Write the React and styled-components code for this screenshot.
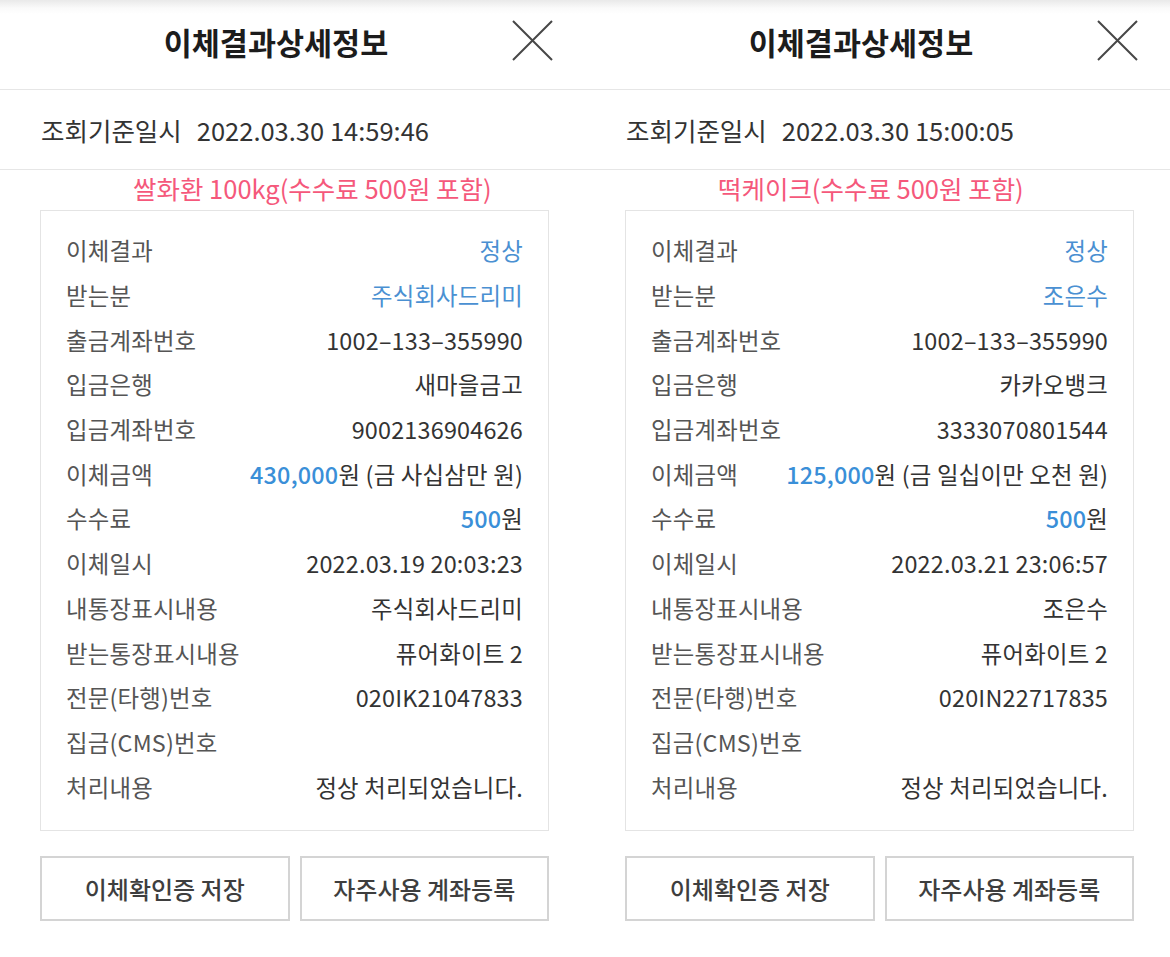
import React from 'react';
import styled, { createGlobalStyle } from 'styled-components';

const GlobalStyle = createGlobalStyle`
    body {
        margin: 0;
        background: #fff;
        font-family: "Noto Sans CJK KR", "Noto Sans", sans-serif;
    }
`;

const Page = styled.div`
    display: flex;
    width: 1170px;
    height: 957px;
    overflow: hidden;
`;

const Panel = styled.div`
    width: 585px;
    flex: none;
    display: flex;
    flex-direction: column;
`;

const Header = styled.div`
    height: 89px;
    display: flex;
    align-items: center;
    border-bottom: 1px solid #e6e6e6;
    background: linear-gradient(#e9e9e9 0, #fafafa 8px, #fff 14px);
`;

const Title = styled.h1`
    flex: 1;
    margin: 0 0 6px;
    padding-left: 40px;
    text-align: center;
    font-size: 30.5px;
    font-weight: 700;
    color: #1c1c1c;
`;

const Close = styled.button`
    width: 41px;
    height: 41px;
    margin: 0 32px 8px 0;
    padding: 0;
    border: none;
    background: none;
    display: flex;
`;

const DateRow = styled.div`
    height: 79px;
    display: flex;
    align-items: center;
    padding-left: 41px;
    border-bottom: 1px solid #e6e6e6;
    font-size: 25.5px;
    color: #333;
    gap: 15px;
`;

const Memo = styled.div`
    height: 34px;
    padding: 0 0 6px 133px;
    display: flex;
    align-items: center;
    font-size: 25.5px;
    color: #f5587b;
`;

const Card = styled.div`
    margin: 0 36px 0 40px;
    border: 1px solid #e4e4e4;
    padding: 17px 25px 21px;
    height: 581px;
`;

const Row = styled.div`
    height: 44.7px;
    display: flex;
    align-items: center;
    justify-content: space-between;
    font-size: 23.4px;
    letter-spacing: 0.2px;
`;

const Label = styled.span`
    color: #555;
`;

const Value = styled.span`
    color: ${p => (p.$blue ? '#4a90d2' : '#333')};
`;

const Num = styled.b`
    color: #3a8fd8;
    font-weight: 500;
`;

const Buttons = styled.div`
    display: flex;
    gap: 10px;
    margin: 25px 36px 0 40px;
`;

const Btn = styled.button`
    flex: 1;
    height: 65px;
    border: 2px solid #d4d4d4;
    background: #fff;
    font-family: inherit;
    font-size: 24px;
    font-weight: 500;
    color: #3e3e3e;
`;

const CloseIcon = () => (
    <svg width="41" height="41" viewBox="0 0 41 41">
        <path d="M1 1L40 40M40 1L1 40" stroke="#474747" strokeWidth="2" fill="none" />
    </svg>
);

const panels = [
    {
        stamp: '2022.03.30 14:59:46',
        memo: '쌀화환 100kg(수수료 500원 포함)',
        receiver: '주식회사드리미',
        bank: '새마을금고',
        account: '9002136904626',
        amount: '430,000',
        amountText: '(금 사십삼만 원)',
        date: '2022.03.19 20:03:23',
        myText: '주식회사드리미',
        code: '020IK21047833',
    },
    {
        stamp: '2022.03.30 15:00:05',
        memo: '떡케이크(수수료 500원 포함)',
        receiver: '조은수',
        bank: '카카오뱅크',
        account: '3333070801544',
        amount: '125,000',
        amountText: '(금 일십이만 오천 원)',
        date: '2022.03.21 23:06:57',
        myText: '조은수',
        code: '020IN22717835',
    },
];

const Detail = ({ data }) => {
    const rows = [
        ['이체결과', <Value $blue>정상</Value>],
        ['받는분', <Value $blue>{data.receiver}</Value>],
        ['출금계좌번호', <Value>1002–133–355990</Value>],
        ['입금은행', <Value>{data.bank}</Value>],
        ['입금계좌번호', <Value>{data.account}</Value>],
        ['이체금액', <Value><Num>{data.amount}</Num>원 {data.amountText}</Value>],
        ['수수료', <Value><Num>500</Num>원</Value>],
        ['이체일시', <Value>{data.date}</Value>],
        ['내통장표시내용', <Value>{data.myText}</Value>],
        ['받는통장표시내용', <Value>퓨어화이트 2</Value>],
        ['전문(타행)번호', <Value>{data.code}</Value>],
        ['집금(CMS)번호', <Value />],
        ['처리내용', <Value>정상 처리되었습니다.</Value>],
    ];

    return (
        <Panel>
            <Header>
                <Title>이체결과상세정보</Title>
                <Close><CloseIcon /></Close>
            </Header>
            <DateRow>
                <span>조회기준일시</span>
                <span>{data.stamp}</span>
            </DateRow>
            <Memo>{data.memo}</Memo>
            <Card>
                {rows.map(([label, value]) => (
                    <Row key={label}>
                        <Label>{label}</Label>
                        {value}
                    </Row>
                ))}
            </Card>
            <Buttons>
                <Btn>이체확인증 저장</Btn>
                <Btn>자주사용 계좌등록</Btn>
            </Buttons>
        </Panel>
    );
};

const App = () => (
    <>
        <GlobalStyle />
        <Page>
            {panels.map(p => (
                <Detail key={p.stamp} data={p} />
            ))}
        </Page>
    </>
);

export default App;
